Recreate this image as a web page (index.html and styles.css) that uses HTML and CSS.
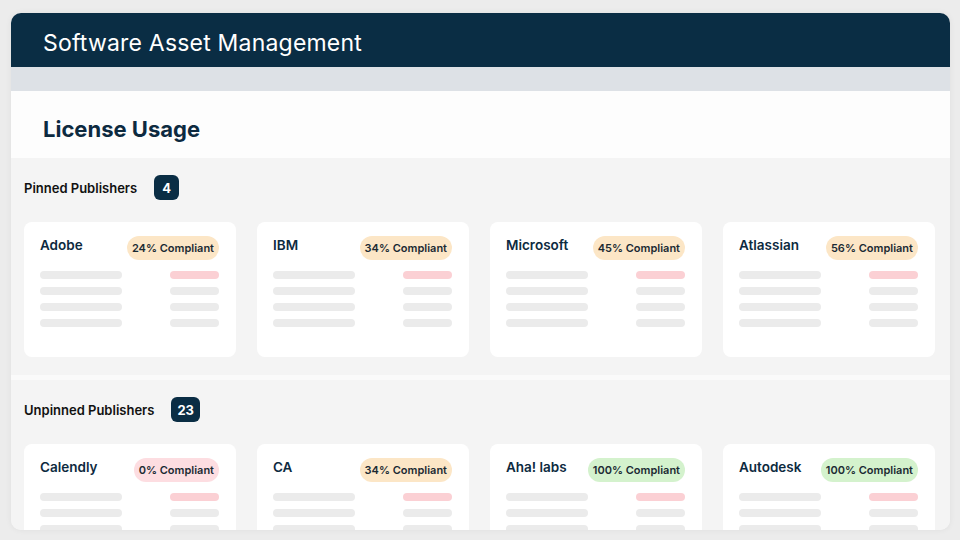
FILE: index.html
```html
<!DOCTYPE html>
<html lang="en">
<head>
  <meta charset="UTF-8">
  <meta name="viewport" content="width=device-width, initial-scale=1.0">
  <title>Software Asset Management</title>
  <link rel="stylesheet" href="styles.css">
</head>
<body>
  <div class="app">
    <div class="topbar">Software Asset Management</div>
    <div class="strip"></div>
    <div class="page-head">
      <h1>License Usage</h1>
    </div>

    <!-- Pinned -->
    <div class="section">
      <div class="section-head">
        <span class="section-title">Pinned Publishers</span>
        <span class="count">4</span>
      </div>
      <div class="cards">
        <div class="card">
          <div class="card-head">
            <span class="name">Adobe</span>
            <span class="pill warn">24% Compliant</span>
          </div>
          <div class="rows">
            <div class="row"><span class="bar"></span><span class="bar short alert"></span></div>
            <div class="row"><span class="bar"></span><span class="bar short"></span></div>
            <div class="row"><span class="bar"></span><span class="bar short"></span></div>
            <div class="row"><span class="bar"></span><span class="bar short"></span></div>
          </div>
        </div>
        <div class="card">
          <div class="card-head">
            <span class="name">IBM</span>
            <span class="pill warn">34% Compliant</span>
          </div>
          <div class="rows">
            <div class="row"><span class="bar"></span><span class="bar short alert"></span></div>
            <div class="row"><span class="bar"></span><span class="bar short"></span></div>
            <div class="row"><span class="bar"></span><span class="bar short"></span></div>
            <div class="row"><span class="bar"></span><span class="bar short"></span></div>
          </div>
        </div>
        <div class="card">
          <div class="card-head">
            <span class="name">Microsoft</span>
            <span class="pill warn">45% Compliant</span>
          </div>
          <div class="rows">
            <div class="row"><span class="bar"></span><span class="bar short alert"></span></div>
            <div class="row"><span class="bar"></span><span class="bar short"></span></div>
            <div class="row"><span class="bar"></span><span class="bar short"></span></div>
            <div class="row"><span class="bar"></span><span class="bar short"></span></div>
          </div>
        </div>
        <div class="card">
          <div class="card-head">
            <span class="name">Atlassian</span>
            <span class="pill warn">56% Compliant</span>
          </div>
          <div class="rows">
            <div class="row"><span class="bar"></span><span class="bar short alert"></span></div>
            <div class="row"><span class="bar"></span><span class="bar short"></span></div>
            <div class="row"><span class="bar"></span><span class="bar short"></span></div>
            <div class="row"><span class="bar"></span><span class="bar short"></span></div>
          </div>
        </div>
      </div>
    </div>

    <div class="divider"></div>

    <!-- Unpinned -->
    <div class="section">
      <div class="section-head">
        <span class="section-title">Unpinned Publishers</span>
        <span class="count">23</span>
      </div>
      <div class="cards">
        <div class="card">
          <div class="card-head">
            <span class="name">Calendly</span>
            <span class="pill bad">0% Compliant</span>
          </div>
          <div class="rows">
            <div class="row"><span class="bar"></span><span class="bar short alert"></span></div>
            <div class="row"><span class="bar"></span><span class="bar short"></span></div>
            <div class="row"><span class="bar"></span><span class="bar short"></span></div>
            <div class="row"><span class="bar"></span><span class="bar short"></span></div>
          </div>
        </div>
        <div class="card">
          <div class="card-head">
            <span class="name">CA</span>
            <span class="pill warn">34% Compliant</span>
          </div>
          <div class="rows">
            <div class="row"><span class="bar"></span><span class="bar short alert"></span></div>
            <div class="row"><span class="bar"></span><span class="bar short"></span></div>
            <div class="row"><span class="bar"></span><span class="bar short"></span></div>
            <div class="row"><span class="bar"></span><span class="bar short"></span></div>
          </div>
        </div>
        <div class="card">
          <div class="card-head">
            <span class="name">Aha! labs</span>
            <span class="pill good">100% Compliant</span>
          </div>
          <div class="rows">
            <div class="row"><span class="bar"></span><span class="bar short alert"></span></div>
            <div class="row"><span class="bar"></span><span class="bar short"></span></div>
            <div class="row"><span class="bar"></span><span class="bar short"></span></div>
            <div class="row"><span class="bar"></span><span class="bar short"></span></div>
          </div>
        </div>
        <div class="card">
          <div class="card-head">
            <span class="name">Autodesk</span>
            <span class="pill good">100% Compliant</span>
          </div>
          <div class="rows">
            <div class="row"><span class="bar"></span><span class="bar short alert"></span></div>
            <div class="row"><span class="bar"></span><span class="bar short"></span></div>
            <div class="row"><span class="bar"></span><span class="bar short"></span></div>
            <div class="row"><span class="bar"></span><span class="bar short"></span></div>
          </div>
        </div>
      </div>
    </div>
  </div>
</body>
</html>
```

FILE: styles.css
```css
body {
  margin: 0;
  padding: 13px 10px 0 11px;
  width: 960px;
  height: 540px;
  box-sizing: border-box;
  overflow: hidden;
  background: #ececec;
  font-family: Inter, Lato, sans-serif;
}

/* App frame */
.app {
  height: 517px;
  border-radius: 10px;
  overflow: hidden;
  background: #f4f4f4;
  box-shadow: 0 0 6px rgba(0, 0, 0, 0.06);
}

.topbar {
  height: 54px;
  padding: 6px 0 0 32px;
  box-sizing: border-box;
  display: flex;
  align-items: center;
  background: #0a2d44;
  color: #ffffff;
  font-size: 23px;
  font-weight: 400;
  letter-spacing: 0.2px;
}

.strip {
  height: 24px;
  background: #dde1e6;
}

.page-head {
  height: 67px;
  box-sizing: border-box;
  padding: 24px 0 0 32px;
  background: #fdfdfd;
}

.page-head h1 {
  margin: 0;
  font-size: 22px;
  line-height: 28px;
  font-weight: 700;
  color: #0d2a40;
}

/* Sections */
.section {
  padding: 17px 15px 18px 13px;
  background: #f4f4f4;
}

.divider {
  height: 5px;
  background: #fafafa;
}

.section-head {
  display: flex;
  align-items: center;
  gap: 17px;
  height: 25px;
}

.section-title {
  font-size: 13px;
  font-weight: 600;
  color: #111111;
}

.count {
  min-width: 25px;
  height: 25px;
  padding: 0 6px;
  box-sizing: border-box;
  display: flex;
  align-items: center;
  justify-content: center;
  border-radius: 6px;
  background: #0a2d44;
  color: #ffffff;
  font-size: 13px;
  font-weight: 700;
}

.cards {
  margin-top: 22px;
  display: grid;
  grid-template-columns: repeat(4, 212px);
  gap: 21px;
}

.card {
  padding: 14px 17px 30px 16px;
  border-radius: 8px;
  background: #ffffff;
}

.card-head {
  display: flex;
  justify-content: space-between;
  align-items: flex-start;
}

.name {
  font-size: 13.5px;
  line-height: 18px;
  font-weight: 600;
  color: #0d2a40;
}

.pill {
  height: 24px;
  padding: 0 5px;
  display: flex;
  align-items: center;
  border-radius: 12px;
  font-size: 11px;
  font-weight: 600;
  color: #1b2a33;
}

.pill.warn {
  background: #fce6c6;
}

.pill.bad {
  background: #fddde1;
}

.pill.good {
  background: #d4f2cd;
}

.rows {
  margin-top: 11px;
  display: flex;
  flex-direction: column;
  gap: 8px;
}

.row {
  display: flex;
  justify-content: space-between;
}

.bar {
  width: 82px;
  height: 8px;
  border-radius: 4px;
  background: #ebebeb;
}

.bar.short {
  width: 49px;
}

.bar.alert {
  background: #fbd0d4;
}
```
